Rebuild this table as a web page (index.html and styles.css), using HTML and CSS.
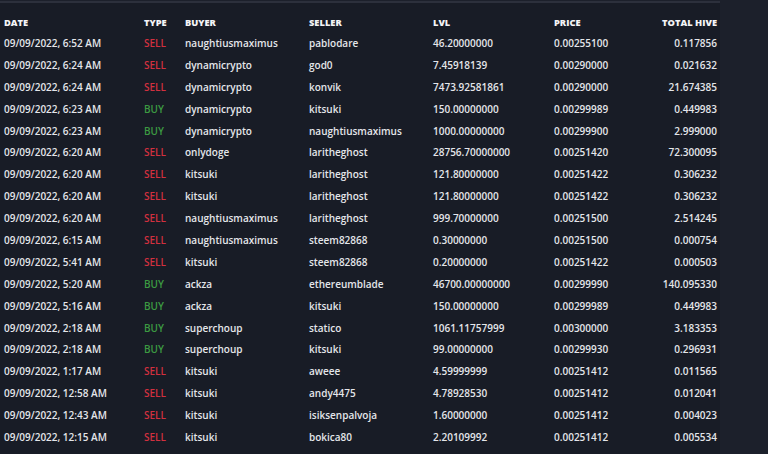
FILE: index.html
```html
<!DOCTYPE html>
<html>
<head>
<meta charset="utf-8">
<link rel="stylesheet" href="styles.css">
</head>
<body>
<div class="page">
  <div class="panel">
    <table class="trades">
      <thead>
        <tr><th>DATE</th><th>TYPE</th><th>BUYER</th><th>SELLER</th><th>LVL</th><th>PRICE</th><th class="r">TOTAL HIVE</th></tr>
      </thead>
      <tbody>
        <tr><td>09/09/2022, 6:52 AM</td><td class="sell">SELL</td><td>naughtiusmaximus</td><td>pablodare</td><td>46.20000000</td><td>0.00255100</td><td class="r">0.117856</td></tr>
        <tr><td>09/09/2022, 6:24 AM</td><td class="sell">SELL</td><td>dynamicrypto</td><td>god0</td><td>7.45918139</td><td>0.00290000</td><td class="r">0.021632</td></tr>
        <tr><td>09/09/2022, 6:24 AM</td><td class="sell">SELL</td><td>dynamicrypto</td><td>konvik</td><td>7473.92581861</td><td>0.00290000</td><td class="r">21.674385</td></tr>
        <tr><td>09/09/2022, 6:23 AM</td><td class="buy">BUY</td><td>dynamicrypto</td><td>kitsuki</td><td>150.00000000</td><td>0.00299989</td><td class="r">0.449983</td></tr>
        <tr><td>09/09/2022, 6:23 AM</td><td class="buy">BUY</td><td>dynamicrypto</td><td>naughtiusmaximus</td><td>1000.00000000</td><td>0.00299900</td><td class="r">2.999000</td></tr>
        <tr><td>09/09/2022, 6:20 AM</td><td class="sell">SELL</td><td>onlydoge</td><td>laritheghost</td><td>28756.70000000</td><td>0.00251420</td><td class="r">72.300095</td></tr>
        <tr><td>09/09/2022, 6:20 AM</td><td class="sell">SELL</td><td>kitsuki</td><td>laritheghost</td><td>121.80000000</td><td>0.00251422</td><td class="r">0.306232</td></tr>
        <tr><td>09/09/2022, 6:20 AM</td><td class="sell">SELL</td><td>kitsuki</td><td>laritheghost</td><td>121.80000000</td><td>0.00251422</td><td class="r">0.306232</td></tr>
        <tr><td>09/09/2022, 6:20 AM</td><td class="sell">SELL</td><td>naughtiusmaximus</td><td>laritheghost</td><td>999.70000000</td><td>0.00251500</td><td class="r">2.514245</td></tr>
        <tr><td>09/09/2022, 6:15 AM</td><td class="sell">SELL</td><td>naughtiusmaximus</td><td>steem82868</td><td>0.30000000</td><td>0.00251500</td><td class="r">0.000754</td></tr>
        <tr><td>09/09/2022, 5:41 AM</td><td class="sell">SELL</td><td>kitsuki</td><td>steem82868</td><td>0.20000000</td><td>0.00251422</td><td class="r">0.000503</td></tr>
        <tr><td>09/09/2022, 5:20 AM</td><td class="buy">BUY</td><td>ackza</td><td>ethereumblade</td><td>46700.00000000</td><td>0.00299990</td><td class="r">140.095330</td></tr>
        <tr><td>09/09/2022, 5:16 AM</td><td class="buy">BUY</td><td>ackza</td><td>kitsuki</td><td>150.00000000</td><td>0.00299989</td><td class="r">0.449983</td></tr>
        <tr><td>09/09/2022, 2:18 AM</td><td class="buy">BUY</td><td>superchoup</td><td>statico</td><td>1061.11757999</td><td>0.00300000</td><td class="r">3.183353</td></tr>
        <tr><td>09/09/2022, 2:18 AM</td><td class="buy">BUY</td><td>superchoup</td><td>kitsuki</td><td>99.00000000</td><td>0.00299930</td><td class="r">0.296931</td></tr>
        <tr><td>09/09/2022, 1:17 AM</td><td class="sell">SELL</td><td>kitsuki</td><td>aweee</td><td>4.59999999</td><td>0.00251412</td><td class="r">0.011565</td></tr>
        <tr><td>09/09/2022, 12:58 AM</td><td class="sell">SELL</td><td>kitsuki</td><td>andy4475</td><td>4.78928530</td><td>0.00251412</td><td class="r">0.012041</td></tr>
        <tr><td>09/09/2022, 12:43 AM</td><td class="sell">SELL</td><td>kitsuki</td><td>isiksenpalvoja</td><td>1.60000000</td><td>0.00251412</td><td class="r">0.004023</td></tr>
        <tr><td>09/09/2022, 12:15 AM</td><td class="sell">SELL</td><td>kitsuki</td><td>bokica80</td><td>2.20109992</td><td>0.00251412</td><td class="r">0.005534</td></tr>
      </tbody>
    </table>
  </div>
</div>
</body>
</html>
```
FILE: styles.css
```css
html, body {
  margin: 0;
  padding: 0;
  background: #1c202b;
}
.page {
  width: 768px;
  height: 454px;
  overflow: hidden;
}
.panel {
  width: 720px;
  height: 454px;
  background: #181c26;
  border-top: 2px solid #2c303c;
  margin-top: 1px;
  box-sizing: border-box;
}
.trades {
  border-collapse: collapse;
  width: 720px;
  table-layout: fixed;
  font-family: "Open Sans", "Liberation Sans", sans-serif;
  font-size: 10px;
  color: #e4e6ea;
  margin-top: 9px;
}
.trades th {
  font-weight: 800;
  text-align: left;
  font-size: 9.3px;
  height: 20px;
  padding: 0;
  color: #f4f4f6;
}
.trades td {
  font-weight: 600;
  height: 21.9px;
  padding: 0;
  white-space: nowrap;
}
.trades th:nth-child(1), .trades td:nth-child(1) { width: 140px; padding-left: 4px; }
.trades th:nth-child(2), .trades td:nth-child(2) { width: 41px; }
.trades th:nth-child(3), .trades td:nth-child(3) { width: 124px; }
.trades th:nth-child(4), .trades td:nth-child(4) { width: 124px; }
.trades th:nth-child(5), .trades td:nth-child(5) { width: 121px; }
.trades th:nth-child(6), .trades td:nth-child(6) { width: 100px; }
.trades th:nth-child(7), .trades td:nth-child(7) { padding-right: 3px; }
.trades .r { text-align: right; }
.trades .sell { color: #d2303f; font-weight: 600; }
.trades .buy { color: #3c9a42; font-weight: 600; }
```
